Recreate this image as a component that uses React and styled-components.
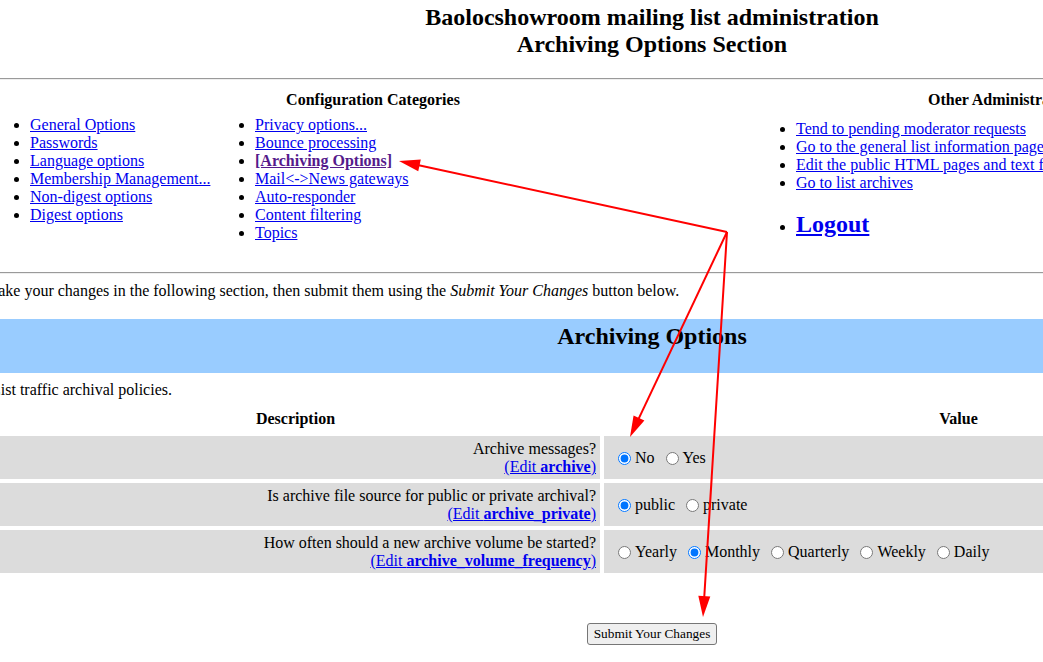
import React from "react";
import styled, { createGlobalStyle } from "styled-components";

const GlobalStyle = createGlobalStyle`
  html, body {
    margin: 0;
    padding: 0;
    background: #ffffff;
    overflow: hidden;
  }
  body {
    font-family: "Liberation Serif", "Times New Roman", serif;
    font-size: 16px;
    line-height: 18px;
    color: #000000;
  }
`;

const Viewport = styled.div`
  position: relative;
  width: 1043px;
  height: 662px;
  overflow: hidden;
`;

const Page = styled.div`
  width: 1328px;
  margin-left: -12px;
`;

const PageTitle = styled.h2`
  margin: 4px 0 0;
  font-size: 24px;
  line-height: 27px;
  font-weight: bold;
  text-align: center;
`;

const Rule = styled.hr`
  height: 0;
  margin: ${(p) => p.$top}px 0 0;
  border: 0;
  border-top: 1px solid #9a9a9a;
  border-bottom: 1px solid #eeeeee;
`;

const LinkSection = styled.div`
  display: grid;
  grid-template-columns: 225px 541px 1fr;
  padding: 0 2px;
  margin: 11px 0 30px;
  align-items: start;
`;

const ColumnHeading = styled.div`
  grid-column: ${(p) => p.$span};
  font-weight: bold;
  text-align: center;
  margin-bottom: ${(p) => p.$below}px;
`;

const Column = styled.div`
  padding-top: ${(p) => p.$top || 0}px;
`;

const BulletList = styled.ul`
  margin: ${(p) => p.$top || 0}px 0 0;
  padding-left: 40px;
  list-style: disc;
`;

const Item = styled.li`
  line-height: 18px;
`;

const NavLink = styled.a`
  color: ${(p) => (p.$visited ? "#551a8b" : "#0000ee")};
  text-decoration: underline;
  font-weight: ${(p) => (p.$bold ? "bold" : "normal")};
  cursor: pointer;
`;

const BigLink = styled.a`
  color: #0000ee;
  text-decoration: underline;
  font-size: 24px;
  line-height: 27px;
  font-weight: bold;
`;

const Intro = styled.p`
  margin: 8px 0 0 -4px;
`;

const OptionsGrid = styled.div`
  display: grid;
  grid-template-columns: 609px 1fr;
  gap: 3px 4px;
  padding: 3px;
  margin-top: 16px;
`;

const Band = styled.div`
  grid-column: 1 / -1;
  background: #99ccff;
  padding: 4px 4px 23px;
  text-align: center;
  font-size: 24px;
  line-height: 27px;
  font-weight: bold;
`;

const FullRow = styled.div`
  grid-column: 1 / -1;
  padding: 5px 4px 4px 0;
`;

const HeadCell = styled.div`
  padding: 4px 4px 5px;
  font-weight: bold;
  text-align: center;
`;

const DescCell = styled.div`
  background: #dcdcdc;
  padding: 4px 4px 3px;
  margin-bottom: ${(p) => (p.$last ? 0 : 1)}px;
  text-align: right;
`;

const ValueCell = styled.div`
  background: #dcdcdc;
  padding: 4px 4px 3px 14px;
  margin-bottom: ${(p) => (p.$last ? 0 : 1)}px;
  display: flex;
  align-items: center;
  gap: 11px;
`;

const Choice = styled.label`
  display: inline-flex;
  align-items: center;
`;

const Radio = styled.input`
  width: 13px;
  height: 13px;
  margin: 0 4px 0 0;
`;

const SubmitRow = styled.div`
  display: flex;
  justify-content: center;
  margin-top: 47px;
`;

const SubmitButton = styled.button`
  font-family: "Liberation Serif", "Times New Roman", serif;
  font-size: 13.33px;
  line-height: 15px;
  color: #000;
  background: #efefef;
  border: 1px solid #767676;
  border-radius: 3px;
  padding: 2px 6px 3px;
  cursor: pointer;
`;

const Overlay = styled.svg`
  position: absolute;
  top: 0;
  left: 0;
  pointer-events: none;
`;

const col1 = [
  "General Options",
  "Passwords",
  "Language options",
  "Membership Management...",
  "Non-digest options",
  "Digest options",
];

const col2 = [
  "Privacy options...",
  "Bounce processing",
  "[Archiving Options]",
  "Mail<->News gateways",
  "Auto-responder",
  "Content filtering",
  "Topics",
];

const other = [
  "Tend to pending moderator requests",
  "Go to the general list information page",
  "Edit the public HTML pages and text files",
  "Go to list archives",
];

const options = [
  {
    q: "Archive messages?",
    key: "archive",
    choices: ["No", "Yes"],
    checked: 0,
  },
  {
    q: "Is archive file source for public or private archival?",
    key: "archive_private",
    choices: ["public", "private"],
    checked: 0,
  },
  {
    q: "How often should a new archive volume be started?",
    key: "archive_volume_frequency",
    choices: ["Yearly", "Monthly", "Quarterly", "Weekly", "Daily"],
    checked: 1,
  },
];

function head(x1, y1, x2, y2, len = 21, half = 6) {
  const dx = x2 - x1;
  const dy = y2 - y1;
  const d = Math.hypot(dx, dy);
  const ux = dx / d;
  const uy = dy / d;
  const bx = x2 - ux * len;
  const by = y2 - uy * len;
  const px = -uy * half;
  const py = ux * half;
  return {
    pts: `${x2},${y2} ${bx + px},${by + py} ${bx - px},${by - py}`,
    bx: x2 - ux * (len - 2),
    by: y2 - uy * (len - 2),
  };
}

const arrows = [
  [727, 232, 399, 161],
  [727, 232, 630, 437],
  [727, 232, 703, 617],
];

function Arrows() {
  return (
    <Overlay width="1043" height="662" viewBox="0 0 1043 662">
      {arrows.map(([x1, y1, x2, y2], i) => {
        const h = head(x1, y1, x2, y2);
        return (
          <g key={i}>
            <line
              x1={x1}
              y1={y1}
              x2={h.bx}
              y2={h.by}
              stroke="#ff0000"
              strokeWidth="2"
            />
            <polygon points={h.pts} fill="#ff0000" />
          </g>
        );
      })}
    </Overlay>
  );
}

export default function App() {
  return (
    <Viewport>
      <GlobalStyle />
      <Page>
        <PageTitle>
          Baolocshowroom mailing list administration
          <br />
          Archiving Options Section
        </PageTitle>
        <Rule $top={20} />

        <LinkSection>
          <ColumnHeading $span="1 / 3" $below={7}>
            Configuration Categories
          </ColumnHeading>
          <ColumnHeading $span="3 / 4" $below={7}>
            Other Administrative Activities
          </ColumnHeading>

          <Column>
            <BulletList>
              {col1.map((t) => (
                <Item key={t}>
                  <NavLink>{t}</NavLink>
                </Item>
              ))}
            </BulletList>
          </Column>
          <Column>
            <BulletList>
              {col2.map((t) => (
                <Item key={t}>
                  {t.startsWith("[") ? (
                    <NavLink $visited $bold>
                      {t}
                    </NavLink>
                  ) : (
                    <NavLink>{t}</NavLink>
                  )}
                </Item>
              ))}
            </BulletList>
          </Column>
          <Column $top={4}>
            <BulletList>
              {other.map((t) => (
                <Item key={t}>
                  <NavLink>{t}</NavLink>
                </Item>
              ))}
            </BulletList>
            <BulletList $top={19}>
              <Item>
                <BigLink>Logout</BigLink>
              </Item>
            </BulletList>
          </Column>
        </LinkSection>

        <Rule $top={0} />

        <Intro>
          Make your changes in the following section, then submit them using
          the <em>Submit Your Changes</em> button below.
        </Intro>

        <OptionsGrid>
          <Band>Archiving Options</Band>
          <FullRow>List traffic archival policies.</FullRow>
          <HeadCell>Description</HeadCell>
          <HeadCell>Value</HeadCell>
          {options.map((o, idx) => {
            const last = idx === options.length - 1;
            return (
              <React.Fragment key={o.key}>
                <DescCell $last={last}>
                  {o.q}
                  <br />
                  <NavLink>
                    (Edit <strong>{o.key}</strong>)
                  </NavLink>
                </DescCell>
                <ValueCell $last={last}>
                  {o.choices.map((c, i) => (
                    <Choice key={c}>
                      <Radio
                        type="radio"
                        name={o.key}
                        defaultChecked={i === o.checked}
                      />
                      {c}
                    </Choice>
                  ))}
                </ValueCell>
              </React.Fragment>
            );
          })}
        </OptionsGrid>

        <SubmitRow>
          <SubmitButton type="button">Submit Your Changes</SubmitButton>
        </SubmitRow>
      </Page>
      <Arrows />
    </Viewport>
  );
}
